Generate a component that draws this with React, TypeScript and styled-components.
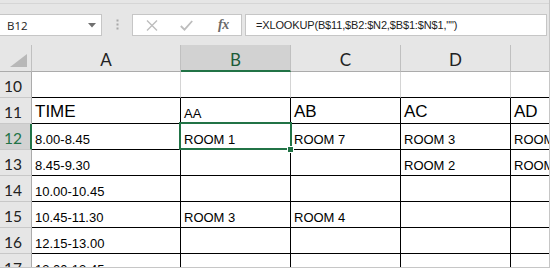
import React from "react";
import styled, { createGlobalStyle } from "styled-components";

const GlobalStyle = createGlobalStyle`
  html, body { margin: 0; padding: 0; background: #ffffff; }
  #root { width: 550px; height: 269px; overflow: hidden; }
`;

const GREEN = "#217346";

const Window = styled.div`
  width: 550px;
  height: 268px;
  box-sizing: border-box;
  background: #e6e6e6;
  border-right: 1px solid #c6c6c6;
  border-bottom: 1px solid #c6c6c6;
  display: flex;
  flex-direction: column;
  overflow: hidden;
  font-family: "Liberation Sans", Arial, sans-serif;
`;

const TopRule = styled.div`
  height: 3px;
  flex: none;
  border-bottom: 1px solid #d6d6d6;
`;

const FormulaBar = styled.div`
  display: flex;
  align-items: stretch;
  height: 22px;
  margin-top: 10px;
  margin-bottom: 9px;
  flex: none;
`;

const NameBox = styled.div`
  width: 102px;
  box-sizing: border-box;
  background: #fff;
  border: 1px solid #c6c6c6;
  border-left: none;
  display: flex;
  align-items: center;
  justify-content: space-between;
  padding: 0 5px 0 7px;
  font-family: "Open Sans", "Liberation Sans", sans-serif;
  font-size: 11.5px;
  color: #222;
`;

const Grip = styled.div`
  width: 30px;
  display: flex;
  align-items: center;
  justify-content: center;
`;

const IconBox = styled.div`
  width: 110px;
  box-sizing: border-box;
  background: #fff;
  border: 1px solid #c6c6c6;
  display: flex;
  align-items: center;
  padding-left: 13px;
  gap: 22px;
`;

const Fx = styled.span`
  font-family: "Liberation Serif", "Times New Roman", serif;
  font-style: italic;
  font-weight: bold;
  font-size: 14px;
  color: #6a6a6a;
  letter-spacing: -0.5px;
  margin-left: 3px;
`;

const FormulaInput = styled.div`
  flex: 1;
  margin-left: 3px;
  margin-right: 2px;
  box-sizing: border-box;
  background: #fff;
  border: 1px solid #c6c6c6;
  display: flex;
  align-items: center;
  padding-left: 10px;
  font-size: 11px;
  letter-spacing: -0.15px;
  color: #222;
  white-space: nowrap;
  overflow: hidden;
`;

const Sheet = styled.div`
  display: grid;
  grid-template-columns: 32px 149px 110px 110px 110px 110px;
  grid-template-rows: 27px repeat(8, 26px);
  flex: none;
`;

const Corner = styled.div`
  background: #e6e6e6;
  border-right: 1px solid #c0c0c0;
  border-bottom: 1px solid #ababab;
  box-sizing: border-box;
  display: flex;
  align-items: flex-end;
  justify-content: flex-end;
  padding: 0 4px 4px 0;
`;

const ColHead = styled.div<{ $sel?: boolean }>`
  box-sizing: border-box;
  background: ${(p) => (p.$sel ? "#d2d2d2" : "#e6e6e6")};
  border-right: 1px solid #c0c0c0;
  border-bottom: ${(p) => (p.$sel ? `2px solid ${GREEN}` : "1px solid #ababab")};
  display: flex;
  align-items: flex-end;
  justify-content: center;
  padding-bottom: ${(p) => (p.$sel ? "0px" : "1px")};
  font-family: Lato, "Open Sans", sans-serif;
  font-size: 17px;
  color: ${(p) => (p.$sel ? "#1d5b38" : "#222")};
`;

const RowHead = styled.div<{ $sel?: boolean }>`
  box-sizing: border-box;
  background: ${(p) => (p.$sel ? "#d2d2d2" : "#e6e6e6")};
  border-right: ${(p) => (p.$sel ? `2px solid ${GREEN}` : "1px solid #ababab")};
  border-bottom: 1px solid #c8c8c8;
  display: flex;
  align-items: flex-end;
  padding: 0 0 2px 4px;
  font-family: Lato, "Open Sans", sans-serif;
  font-size: 15.5px;
  color: ${(p) => (p.$sel ? GREEN : "#222")};
`;

const Cell = styled.div<{ $ruled?: boolean; $big?: boolean }>`
  position: relative;
  box-sizing: border-box;
  background: #fff;
  border-right: 1px solid ${(p) => (p.$ruled ? "#000" : "#d4d4d4")};
  border-bottom: 1px solid #000;
  display: flex;
  align-items: flex-end;
  padding: 0 0 ${(p) => (p.$big ? "1px" : "2px")} 3px;
  font-size: ${(p) => (p.$big ? "17px" : "13px")};
  color: #000;
  white-space: nowrap;
  overflow: visible;
  min-width: 0;
`;

const Selection = styled.div`
  position: absolute;
  left: -2px;
  top: -2px;
  right: -2px;
  bottom: -1px;
  border: 2px solid ${GREEN};
  pointer-events: none;
  z-index: 2;
`;

const FillHandle = styled.div`
  position: absolute;
  right: -4px;
  bottom: -4px;
  width: 5px;
  height: 5px;
  background: ${GREEN};
  border: 1px solid #fff;
  z-index: 3;
`;

const columns = ["A", "B", "C", "D", "E"];

type Row = { n: number; cells: string[]; big?: boolean };

const rows: Row[] = [
  { n: 10, cells: ["", "", "", "", ""] },
  { n: 11, cells: ["TIME", "AA", "AB", "AC", "AD"], big: true },
  { n: 12, cells: ["8.00-8.45", "ROOM 1", "ROOM 7", "ROOM 3", "ROOM 5"] },
  { n: 13, cells: ["8.45-9.30", "", "", "ROOM 2", "ROOM 6"] },
  { n: 14, cells: ["10.00-10.45", "", "", "", ""] },
  { n: 15, cells: ["10.45-11.30", "ROOM 3", "ROOM 4", "", ""] },
  { n: 16, cells: ["12.15-13.00", "", "", "", ""] },
  { n: 17, cells: ["13.00-13.45", "", "", "", ""] },
];

export default function App() {
  return (
    <>
      <GlobalStyle />
      <Window>
        <TopRule />
        <FormulaBar>
          <NameBox>
            <span>B12</span>
            <svg width="8" height="5" viewBox="0 0 8 5">
              <polygon points="0,0 8,0 4,4.5" fill="#707070" />
            </svg>
          </NameBox>
          <Grip>
            <svg width="3" height="12" viewBox="0 0 3 12">
              <rect x="0.5" y="0.5" width="2" height="2" fill="#a8a8a8" />
              <rect x="0.5" y="4.5" width="2" height="2" fill="#a8a8a8" />
              <rect x="0.5" y="8.5" width="2" height="2" fill="#a8a8a8" />
            </svg>
          </Grip>
          <IconBox>
            <svg width="12" height="11" viewBox="0 0 12 11">
              <path d="M1 0.5 L11 10.5 M11 0.5 L1 10.5" stroke="#bdbdbd" strokeWidth="1.4" fill="none" />
            </svg>
            <svg width="13" height="11" viewBox="0 0 13 11">
              <path d="M0.8 6 L4.5 9.6 L12.2 1" stroke="#bdbdbd" strokeWidth="1.8" fill="none" />
            </svg>
            <Fx>fx</Fx>
          </IconBox>
          <FormulaInput>=XLOOKUP(B$11,$B2:$N2,$B$1:$N$1,"")</FormulaInput>
        </FormulaBar>
        <Sheet>
          <Corner>
            <svg width="17" height="13" viewBox="0 0 17 13">
              <polygon points="17,0 17,13 0,13" fill="#b8b8b8" />
            </svg>
          </Corner>
          {columns.map((c) => (
            <ColHead key={c} $sel={c === "B"}>
              {c}
            </ColHead>
          ))}
          {rows.map((r) => (
            <React.Fragment key={r.n}>
              <RowHead $sel={r.n === 12}>{r.n}</RowHead>
              {r.cells.map((v, i) => {
                const big = r.big && i !== 1;
                return (
                  <Cell key={i} $ruled={r.n >= 11} $big={big}>
                    {v}
                    {r.n === 12 && i === 1 && (
                      <>
                        <Selection />
                        <FillHandle />
                      </>
                    )}
                  </Cell>
                );
              })}
            </React.Fragment>
          ))}
        </Sheet>
      </Window>
    </>
  );
}
